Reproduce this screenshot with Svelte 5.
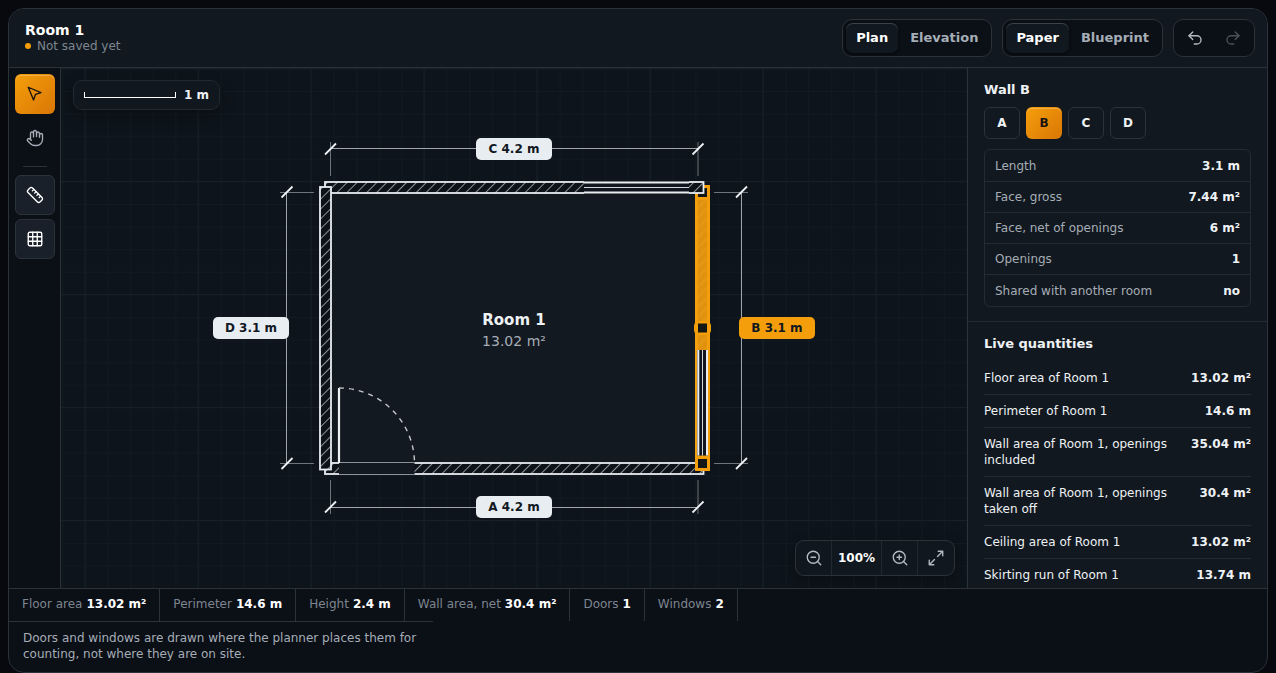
<script>
    let view = $state('Plan');
    let theme = $state('Paper');
    let tool = $state('select');
    let wall = $state('B');
    let showDimensions = $state(true);
    let showGrid = $state(true);
    let zoom = $state(100);

    const walls = ['A', 'B', 'C', 'D'];

    const wallFacts = [
        ['Length', '3.1 m'],
        ['Face, gross', '7.44 m²'],
        ['Face, net of openings', '6 m²'],
        ['Openings', '1'],
        ['Shared with another room', 'no']
    ];

    const quantities = [
        ['Floor area of Room 1', '13.02 m²'],
        ['Perimeter of Room 1', '14.6 m'],
        ['Wall area of Room 1, openings included', '35.04 m²'],
        ['Wall area of Room 1, openings taken off', '30.4 m²'],
        ['Ceiling area of Room 1', '13.02 m²'],
        ['Skirting run of Room 1', '13.74 m']
    ];

    const totals = [
        ['Floor area', '13.02 m²'],
        ['Perimeter', '14.6 m'],
        ['Height', '2.4 m'],
        ['Wall area, net', '30.4 m²'],
        ['Doors', '1'],
        ['Windows', '2']
    ];

    // Label centres on the drawing, one per wall
    const labels = [
        { id: 'A', text: 'A 4.2 m', x: 514, y: 507 },
        { id: 'B', text: 'B 3.1 m', x: 777, y: 328 },
        { id: 'C', text: 'C 4.2 m', x: 514, y: 149 },
        { id: 'D', text: 'D 3.1 m', x: 251, y: 328 }
    ];

    // Corners where a dimension line meets its extension line
    const ticks = [
        [330.5, 149], [698, 149],
        [330.5, 507], [698, 507],
        [287, 192], [287, 463.5],
        [741.5, 192], [741.5, 463.5]
    ];
</script>

<div class="page">
    <div class="planner">
        <header class="topbar">
            <div class="title">
                <h1>Room 1</h1>
                <p class="status"><span class="dot"></span>Not saved yet</p>
            </div>

            <div class="group">
                {#each ['Plan', 'Elevation'] as name}
                    <button class="segment" class:on={view === name} onclick={() => (view = name)}>{name}</button>
                {/each}
            </div>
            <div class="group">
                {#each ['Paper', 'Blueprint'] as name}
                    <button class="segment" class:on={theme === name} onclick={() => (theme = name)}>{name}</button>
                {/each}
            </div>
            <div class="group">
                <button class="step" aria-label="Undo">
                    <svg class="icon" viewBox="0 0 24 24"><path d="M9 14 4 9l5-5" /><path d="M4 9h10.5a5.5 5.5 0 0 1 0 11H11" /></svg>
                </button>
                <button class="step" aria-label="Redo" disabled>
                    <svg class="icon" viewBox="0 0 24 24"><path d="m15 14 5-5-5-5" /><path d="M20 9H9.5a5.5 5.5 0 0 0 0 11H13" /></svg>
                </button>
            </div>
        </header>

        <div class="workspace">
            <nav class="tools" aria-label="Tools">
                <button class="tool" class:active={tool === 'select'} aria-label="Select" onclick={() => (tool = 'select')}>
                    <svg class="icon" viewBox="0 0 24 24"><path d="m3 3 7.07 16.97 2.51-7.39 7.39-2.51L3 3z" /></svg>
                </button>
                <button class="tool" class:active={tool === 'pan'} aria-label="Pan" onclick={() => (tool = 'pan')}>
                    <svg class="icon" viewBox="0 0 24 24">
                        <path d="M18 11V6a2 2 0 0 0-4 0" />
                        <path d="M14 10V4a2 2 0 0 0-4 0v2" />
                        <path d="M10 10.5V6a2 2 0 0 0-4 0v8" />
                        <path d="M18 8a2 2 0 1 1 4 0v6a8 8 0 0 1-8 8h-2c-2.8 0-4.5-.86-5.99-2.34l-3.6-3.6a2 2 0 0 1 2.83-2.82L7 15" />
                    </svg>
                </button>
                <hr />
                <button class="tool" class:pressed={showDimensions} aria-label="Dimensions" onclick={() => (showDimensions = !showDimensions)}>
                    <svg class="icon" viewBox="0 0 24 24">
                        <path d="M21.3 15.3a2.4 2.4 0 0 1 0 3.4l-2.6 2.6a2.4 2.4 0 0 1-3.4 0L2.7 8.7a2.41 2.41 0 0 1 0-3.4l2.6-2.6a2.41 2.41 0 0 1 3.4 0Z" />
                        <path d="m14.5 12.5 2-2M11.5 9.5l2-2M8.5 6.5l2-2M17.5 15.5l2-2" />
                    </svg>
                </button>
                <button class="tool" class:pressed={showGrid} aria-label="Grid" onclick={() => (showGrid = !showGrid)}>
                    <svg class="icon" viewBox="0 0 24 24">
                        <rect x="3" y="3" width="18" height="18" rx="2" />
                        <path d="M3 9h18M3 15h18M9 3v18M15 3v18" />
                    </svg>
                </button>
            </nav>

            <main class="canvas">
                <svg class="drawing" viewBox="61 68 906 520" preserveAspectRatio="xMidYMid slice" role="img" aria-label="Plan of Room 1">
                    <defs>
                        <pattern id="minor" x="85" y="68.4" width="22.6" height="22.6" patternUnits="userSpaceOnUse">
                            <path class="minor" d="M0 .5H22.6M.5 0V22.6" />
                        </pattern>
                        <pattern id="major" x="84.5" y="68" width="113" height="113" patternUnits="userSpaceOnUse">
                            <path class="major" d="M0 .5H113M.5 0V113" />
                        </pattern>
                        <pattern id="hatch" width="7" height="7" patternUnits="userSpaceOnUse" patternTransform="rotate(45)">
                            <path class="hatch" d="M3.5 0V7" />
                        </pattern>
                        <pattern id="hatch-selected" width="7" height="7" patternUnits="userSpaceOnUse" patternTransform="rotate(45)">
                            <rect class="selected-fill" width="7" height="7" />
                            <path class="selected-hatch" d="M3.5 0V7" />
                        </pattern>
                    </defs>

                    {#if showGrid}
                        <rect x="61" y="68" width="906" height="520" fill="url(#minor)" />
                        <rect x="61" y="68" width="906" height="520" fill="url(#major)" />
                    {/if}

                    <rect class="floor" x="331" y="193" width="366" height="270" />

                    <!-- wall A with the door -->
                    <rect class="wall-base" x="325" y="463" width="378.5" height="11" />
                    <rect class="wall" x="325" y="463" width="378.5" height="11" />
                    <rect class="floor" x="339" y="461.5" width="75.5" height="14" />
                    <path class="sill" d="M339 462.5H414.5M339 474.5H414.5" />
                    <path class="leaf" d="M339 388V463" />
                    <path class="swing" d="M339 388A75.5 75.5 0 0 1 414.5 463" />

                    <!-- wall B, selected, with a window and its grips -->
                    <rect class="wall-selected" x="696.5" y="186.5" width="12" height="283" />
                    <rect class="glass" x="697" y="350" width="11" height="105.5" />
                    <path class="frame" d="M698.3 350V455.5M707 350V455.5" />
                    <path class="pane" d="M702.5 350V455.5" />
                    <rect class="grip" x="696.5" y="186.5" width="12" height="12" />
                    <rect class="grip-halo" x="694" y="321" width="17" height="14" rx="5" />
                    <rect class="grip-core" x="698" y="323.5" width="9" height="9" />
                    <rect class="grip" x="696.5" y="457.5" width="12" height="12" />

                    <!-- wall C with a window -->
                    <rect class="wall-base" x="325" y="182" width="378.5" height="11" />
                    <rect class="wall" x="325" y="182" width="378.5" height="11" />
                    <rect class="glass" x="584" y="181" width="105" height="13" />
                    <path class="frame" d="M584 182.5H689M584 192.5H689" />
                    <path class="pane" d="M584 187.5H689" />

                    <!-- wall D -->
                    <rect class="wall-base" x="320" y="187" width="11" height="282.5" />
                    <rect class="wall" x="320" y="187" width="11" height="282.5" />

                    {#if showDimensions}
                        <path class="extension" d="M330.5 142V176M698 142V176M330.5 480V514M698 480V514M280 192.5H314M280 463.5H314M714 192.5H748M714 463.5H748" />
                        <path class="dimension" d="M330.5 148.5H698M330.5 507.5H698M286.5 192V463.5M741.5 192V463.5" />
                        {#each ticks as [x, y]}
                            <path class="tick" d="M{x - 5.5} {y + 5.5}l11 -11" />
                        {/each}
                        {#each labels as label}
                            <g class="label" class:current={label.id === wall}>
                                <rect x={label.x - 38} y={label.y - 11} width="76" height="22" rx="5" />
                                <text x={label.x} y={label.y + 4}>{label.text}</text>
                            </g>
                        {/each}
                    {/if}

                    <text class="room-name" x="514" y="325">Room 1</text>
                    <text class="room-area" x="514" y="346">13.02 m²</text>
                </svg>

                <div class="scale"><span class="ruler"></span>1 m</div>

                <div class="zoom">
                    <button aria-label="Zoom out" onclick={() => (zoom = Math.max(25, zoom - 25))}>
                        <svg class="icon" viewBox="0 0 24 24"><circle cx="11" cy="11" r="8" /><path d="m21 21-4.35-4.35M8 11h6" /></svg>
                    </button>
                    <button class="percent" onclick={() => (zoom = 100)}>{zoom}%</button>
                    <button aria-label="Zoom in" onclick={() => (zoom = Math.min(400, zoom + 25))}>
                        <svg class="icon" viewBox="0 0 24 24"><circle cx="11" cy="11" r="8" /><path d="m21 21-4.35-4.35M11 8v6M8 11h6" /></svg>
                    </button>
                    <button aria-label="Fit to view" onclick={() => (zoom = 100)}>
                        <svg class="icon" viewBox="0 0 24 24"><path d="M15 3h6v6M9 21H3v-6M21 3l-7 7M3 21l7-7" /></svg>
                    </button>
                </div>
            </main>

            <aside class="panel">
                <section>
                    <h2>Wall {wall}</h2>
                    <div class="wall-tabs">
                        {#each walls as name}
                            <button class:active={wall === name} onclick={() => (wall = name)}>{name}</button>
                        {/each}
                    </div>
                    <table class="facts">
                        <tbody>
                            {#each wallFacts as [name, value]}
                                <tr><th scope="row">{name}</th><td>{value}</td></tr>
                            {/each}
                        </tbody>
                    </table>
                </section>
                <section>
                    <h2>Live quantities</h2>
                    <table class="quantities">
                        <tbody>
                            {#each quantities as [name, value]}
                                <tr><th scope="row">{name}</th><td>{value}</td></tr>
                            {/each}
                        </tbody>
                    </table>
                </section>
            </aside>
        </div>

        <footer>
            <div class="totals">
                {#each totals as [name, value]}
                    <div class="total">{name} <strong>{value}</strong></div>
                {/each}
            </div>
            <p class="note">Doors and windows are drawn where the planner places them for counting, not where they are on site.</p>
        </footer>
    </div>
</div>

<style>
    :global(body) {
        background: #07090e;
    }

    .page {
        --line: #2a323a;
        --ink: #eef2f5;
        --muted: #a5adb6;
        --deep: #0b0f16;
        --surface: #12181f;
        --amber: #f59e0b;
        box-sizing: border-box;
        height: 100vh;
        padding: 8px 8px 0;
        color: var(--ink);
        font: 12px/16px "DejaVu Sans", sans-serif;
    }

    .page :global(*) {
        box-sizing: border-box;
    }

    button {
        padding: 0;
        border: 0;
        background: none;
        color: inherit;
        font: inherit;
        cursor: pointer;
    }

    h1, h2, p {
        margin: 0;
    }

    .icon {
        display: block;
        width: 18px;
        height: 18px;
        fill: none;
        stroke: currentColor;
        stroke-width: 1.8;
        stroke-linecap: round;
        stroke-linejoin: round;
    }

    .planner {
        display: flex;
        flex-direction: column;
        height: 100%;
        overflow: hidden;
        border: 1px solid var(--line);
        border-radius: 16px;
        background: var(--deep);
    }

    /* Top bar */
    .topbar {
        display: flex;
        align-items: center;
        gap: 10px;
        padding: 10px 12px 10px 16px;
        border-bottom: 1px solid var(--line);
        background: var(--surface);
    }

    .title {
        flex: 1;
    }

    h1 {
        font-size: 14px;
        line-height: 16px;
        color: #fff;
    }

    .status {
        display: flex;
        align-items: center;
        gap: 6px;
        color: #7d8690;
    }

    .dot {
        width: 6px;
        height: 6px;
        border-radius: 50%;
        background: var(--amber);
    }

    .group {
        display: flex;
        gap: 2px;
        padding: 3px;
        border: 1px solid var(--line);
        border-radius: 10px;
        background: var(--deep);
    }

    .segment {
        height: 30px;
        padding: 0 10px;
        border-radius: 7px;
        color: var(--muted);
        font-size: 13px;
        font-weight: 700;
    }

    .segment.on {
        background: var(--surface);
        color: #fff;
        box-shadow: inset 0 1px 0 #3a424a, 0 1px 3px rgba(0, 0, 0, 0.6);
    }

    .step {
        display: grid;
        place-items: center;
        width: 36px;
        height: 30px;
        color: #b3bac2;
    }

    .step:disabled {
        color: #4a525a;
    }

    /* Work area */
    .workspace {
        display: flex;
        flex: 1;
        min-height: 0;
    }

    .tools {
        display: flex;
        flex-direction: column;
        gap: 4px;
        padding: 6px 5px 6px 6px;
        border-right: 1px solid var(--line);
    }

    .tools hr {
        width: 24px;
        height: 1px;
        margin: 4px auto;
        border: 0;
        background: var(--line);
    }

    .tool {
        display: grid;
        place-items: center;
        width: 40px;
        height: 40px;
        border: 1px solid transparent;
        border-radius: 6px;
        color: var(--muted);
    }

    .tool.pressed {
        border-color: var(--line);
        background: #19202a;
        color: #fff;
    }

    .tool.active,
    .wall-tabs .active {
        border-color: transparent;
        background: linear-gradient(135deg, #f59e0b, #d97706) border-box;
        color: #1a1410;
        box-shadow: inset 0 1px 0 rgba(255, 255, 255, 0.25);
    }

    .canvas {
        position: relative;
        flex: 1;
        min-width: 0;
        overflow: hidden;
        background: #0d141b;
    }

    .drawing {
        display: block;
        width: 100%;
        height: 100%;
    }

    .minor {
        stroke: #121a21;
    }

    .major {
        stroke: #172027;
    }

    .hatch {
        stroke: #8b9299;
    }

    .floor {
        fill: #131920;
    }

    .wall-base {
        fill: #0d1118;
    }

    .wall {
        fill: url(#hatch);
        stroke: #e8edf2;
        stroke-width: 1.8;
    }

    .wall-selected {
        fill: url(#hatch-selected);
        stroke: #f59e0b;
        stroke-width: 3;
    }

    .selected-fill {
        fill: #df920f;
    }

    .selected-hatch {
        stroke: #e79815;
        stroke-width: 2;
    }

    .glass {
        fill: #11151f;
    }

    .frame {
        stroke: #e8edf2;
        stroke-width: 2;
    }

    .pane {
        stroke: #d3d8dd;
    }

    .sill {
        stroke: #8b9299;
    }

    .leaf {
        stroke: #eef2f5;
        stroke-width: 2.2;
    }

    .swing {
        fill: none;
        stroke: #c3c8ce;
        stroke-width: 1.4;
        stroke-dasharray: 5 5;
    }

    .grip {
        fill: #151617;
        stroke: #f59e0b;
        stroke-width: 3;
    }

    .grip-halo {
        fill: #f59e0b;
    }

    .grip-core {
        fill: #151617;
    }

    .extension {
        stroke: #6d747b;
    }

    .dimension {
        stroke: #a0a6ac;
    }

    .tick {
        stroke: #eef2f5;
        stroke-width: 1.8;
    }

    .drawing text {
        text-anchor: middle;
    }

    .label rect {
        fill: #e8edf2;
    }

    .label text {
        fill: #12181f;
        font-size: 12px;
        font-weight: 700;
    }

    .label.current rect {
        fill: #f59e0b;
    }

    .room-name {
        fill: #eef2f5;
        font-size: 15px;
        font-weight: 700;
    }

    .room-area {
        fill: #a5adb6;
        font-size: 14px;
    }

    .scale {
        position: absolute;
        top: 12px;
        left: 12px;
        display: flex;
        align-items: center;
        gap: 8px;
        height: 30px;
        padding: 0 10px;
        border: 1px solid #202830;
        border-radius: 9px;
        background: #10171e;
        box-shadow: 0 6px 16px rgba(0, 0, 0, 0.3);
        font-weight: 700;
    }

    .ruler {
        width: 92px;
        height: 6px;
        border: 1px solid #fff;
        border-top: 0;
    }

    .zoom {
        position: absolute;
        right: 12px;
        bottom: 12px;
        display: flex;
        overflow: hidden;
        border: 1px solid var(--line);
        border-radius: 9px;
        background: #10171e;
        box-shadow: 0 6px 16px rgba(0, 0, 0, 0.3);
        color: #b3bac2;
    }

    .zoom button {
        display: grid;
        place-items: center;
        width: 36px;
        height: 34px;
        border-right: 1px solid #202830;
    }

    .zoom button:last-child {
        border-right: 0;
    }

    .zoom .percent {
        width: 50px;
        color: #fff;
        font-weight: 700;
    }

    /* Side panel */
    .panel {
        flex: none;
        width: 300px;
        overflow: hidden;
        border-left: 1px solid var(--line);
        background: var(--surface);
    }

    .panel section {
        padding: 14px 16px;
    }

    .panel section + section {
        border-top: 1px solid #232b33;
    }

    h2 {
        font-size: 13px;
        line-height: 15px;
    }

    .wall-tabs {
        display: flex;
        gap: 6px;
        margin: 10px 0;
    }

    .wall-tabs button {
        width: 36px;
        height: 32px;
        border: 1px solid var(--line);
        border-radius: 6px;
        font-weight: 700;
    }

    table {
        width: 100%;
        border-spacing: 0;
    }

    th {
        padding: 0;
        font-weight: 400;
        text-align: left;
    }

    td {
        padding: 0;
        font-weight: 700;
        text-align: right;
        vertical-align: top;
        white-space: nowrap;
    }

    tr:not(:last-child) > * {
        border-bottom: 1px solid #232b33;
    }

    .facts {
        padding-top: 1px;
        border: 1px solid #232b33;
        border-radius: 6px;
    }

    .facts th,
    .facts td {
        height: 31px;
        padding: 0 10px;
        vertical-align: middle;
    }

    .facts th {
        color: var(--muted);
    }

    .quantities {
        margin-top: 11px;
    }

    .quantities th,
    .quantities td {
        padding: 8px 0;
    }

    .quantities td {
        padding-left: 12px;
    }

    /* Totals */
    footer {
        border-top: 1px solid var(--line);
    }

    .totals {
        display: flex;
        flex-wrap: wrap;
    }

    .total {
        display: flex;
        gap: 4px;
        padding: 7px 13px 9px;
        border-right: 1px solid var(--line);
        color: #7d8690;
    }

    .total strong {
        color: #fff;
    }

    .note {
        max-width: 424px;
        padding: 8px 14px 10px;
        border-top: 1px solid var(--line);
        color: var(--muted);
    }
</style>
